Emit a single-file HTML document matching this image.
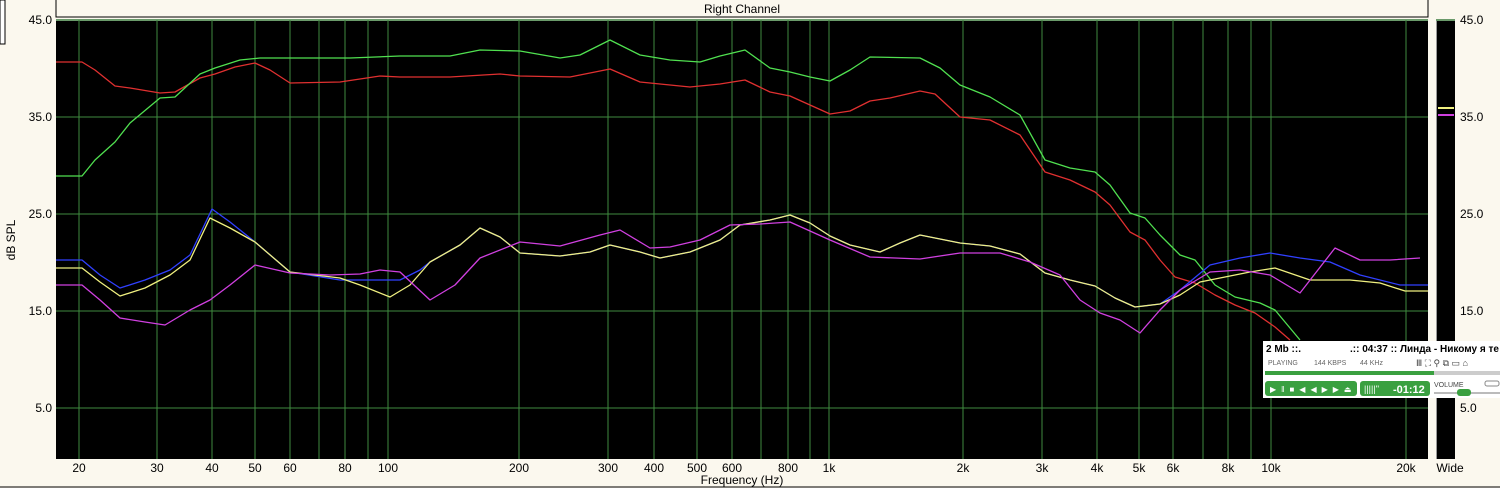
<!DOCTYPE html><html><head><style>
body{margin:0;width:1500px;height:488px;background:#fbf8ee;overflow:hidden;font-family:"Liberation Sans",sans-serif;position:relative}
</style></head><body>
<svg width="1500" height="488" style="position:absolute;left:0;top:0" font-family="Liberation Sans, sans-serif">
<rect x="0" y="0" width="5" height="44" fill="#fff" stroke="#000" stroke-width="1"/>
<rect x="56" y="-1" width="1372" height="18" fill="#fbf8ee" stroke="#000"/>
<text x="742" y="13" font-size="12" text-anchor="middle">Right Channel</text>
<rect x="56" y="19" width="1372" height="440" fill="#000"/>
<line x1="56" y1="20" x2="1428" y2="20" stroke="#6a9a6a" stroke-width="2"/>
<g stroke="#3f8a3f" stroke-width="1">
<line x1="56" y1="117" x2="1428" y2="117"/><line x1="56" y1="214" x2="1428" y2="214"/><line x1="56" y1="311" x2="1428" y2="311"/><line x1="56" y1="408" x2="1428" y2="408"/>
<line x1="79" y1="20" x2="79" y2="459"/><line x1="157" y1="20" x2="157" y2="459"/><line x1="212" y1="20" x2="212" y2="459"/><line x1="255" y1="20" x2="255" y2="459"/><line x1="290" y1="20" x2="290" y2="459"/><line x1="319" y1="20" x2="319" y2="459"/><line x1="345" y1="20" x2="345" y2="459"/><line x1="368" y1="20" x2="368" y2="459"/><line x1="388" y1="20" x2="388" y2="459"/>
<line x1="519" y1="20" x2="519" y2="459"/><line x1="608" y1="20" x2="608" y2="459"/><line x1="654" y1="20" x2="654" y2="459"/><line x1="697" y1="20" x2="697" y2="459"/><line x1="732" y1="20" x2="732" y2="459"/><line x1="761" y1="20" x2="761" y2="459"/><line x1="788" y1="20" x2="788" y2="459"/><line x1="810" y1="20" x2="810" y2="459"/><line x1="829" y1="20" x2="829" y2="459"/>
<line x1="963" y1="20" x2="963" y2="459"/><line x1="1042" y1="20" x2="1042" y2="459"/><line x1="1097" y1="20" x2="1097" y2="459"/><line x1="1139" y1="20" x2="1139" y2="459"/><line x1="1173" y1="20" x2="1173" y2="459"/><line x1="1203" y1="20" x2="1203" y2="459"/><line x1="1228" y1="20" x2="1228" y2="459"/><line x1="1251" y1="20" x2="1251" y2="459"/><line x1="1271" y1="20" x2="1271" y2="459"/><line x1="1406" y1="20" x2="1406" y2="459"/>
</g>
<g fill="none" stroke-width="1.3" stroke-linejoin="round">
<polyline stroke="#e03030" points="56,62 82,62 95,70 115,86 130,88 160,93 175,92 200,78 215,74 235,67 255,63 270,70 290,83 340,82 380,76 400,77 450,77 500,74 520,76 570,77 610,69 640,82 690,87 720,84 745,80 770,92 790,96 810,105 830,114 850,111 870,101 890,98 920,91 935,94 960,117 990,120 1020,135 1045,172 1070,180 1095,192 1110,205 1130,232 1145,240 1160,260 1175,277 1195,283 1215,295 1235,305 1255,313 1275,327 1290,340"/>
<polyline stroke="#50e050" points="56,176 82,176 95,160 115,142 130,123 160,98 175,97 200,74 215,68 240,60 260,58 290,58 350,58 400,56 450,56 480,50 520,51 560,58 580,55 610,40 640,55 670,60 700,62 720,56 745,50 770,68 790,72 810,77 830,81 850,70 870,57 920,58 940,68 960,85 990,97 1020,115 1045,160 1070,168 1095,172 1110,185 1130,213 1145,218 1160,235 1180,255 1195,260 1215,285 1235,297 1260,303 1275,310 1300,340"/>
<polyline stroke="#3040ff" points="56,260 82,260 100,275 120,288 145,280 170,270 190,255 212,209 230,222 255,242 290,272 340,280 400,280 420,270 430,262 460,245 480,228 500,237 520,253 560,256 590,252 610,245 640,252 660,258 690,252 720,240 740,225 770,220 790,215 810,223 830,236 850,245 880,252 900,243 920,235 960,243 990,246 1020,254 1045,273 1070,280 1095,286 1115,298 1135,307 1160,304 1180,290 1210,265 1240,258 1270,253 1300,258 1330,262 1360,275 1400,285 1428,285"/>
<polyline stroke="#f0f080" points="56,268 82,268 100,282 120,296 145,288 170,275 190,260 210,218 230,228 255,242 290,272 340,278 360,285 390,297 410,285 430,262 460,245 480,228 500,237 520,253 560,256 590,252 610,245 640,252 660,258 690,252 720,240 740,225 770,220 790,215 810,223 830,236 850,245 880,252 900,243 920,235 960,243 990,246 1020,254 1045,273 1070,280 1095,286 1115,298 1135,307 1160,304 1180,295 1200,282 1230,276 1250,272 1275,268 1310,280 1350,280 1380,283 1405,291 1428,291"/>
<polyline stroke="#d040e0" points="56,285 82,285 100,300 120,318 145,322 165,325 190,310 210,300 230,285 255,265 290,273 330,275 360,274 380,270 400,272 430,300 455,285 480,258 520,242 560,246 600,235 620,230 650,248 670,247 700,240 730,225 760,224 790,222 830,240 870,257 920,259 960,253 1000,253 1030,262 1060,275 1080,300 1100,313 1120,320 1140,333 1160,310 1180,290 1210,272 1240,270 1270,275 1300,293 1335,248 1360,260 1390,260 1420,258"/>
</g>
<rect x="1436" y="19" width="19" height="440" fill="#000"/>
<line x1="1436.5" y1="19" x2="1436.5" y2="459" stroke="#999"/>
<line x1="1436" y1="20" x2="1455" y2="20" stroke="#6a9a6a" stroke-width="2"/>
<line x1="1438" y1="108" x2="1454" y2="108" stroke="#f0f080" stroke-width="2"/>
<line x1="1438" y1="115" x2="1454" y2="115" stroke="#d040e0" stroke-width="2"/>
<g font-size="12" fill="#000">
<text x="52" y="24" text-anchor="end">45.0</text><text x="52" y="121" text-anchor="end">35.0</text><text x="52" y="218" text-anchor="end">25.0</text><text x="52" y="315" text-anchor="end">15.0</text><text x="52" y="412" text-anchor="end">5.0</text>
<text x="1460" y="24">45.0</text><text x="1460" y="121">35.0</text><text x="1460" y="218">25.0</text><text x="1460" y="315">15.0</text><text x="1460" y="412">5.0</text>
<text x="15" y="240" transform="rotate(-90 15 240)" text-anchor="middle">dB SPL</text>
<g text-anchor="middle">
<text x="79" y="472">20</text><text x="157" y="472">30</text><text x="212" y="472">40</text><text x="255" y="472">50</text><text x="290" y="472">60</text><text x="345" y="472">80</text><text x="388" y="472">100</text><text x="519" y="472">200</text><text x="608" y="472">300</text><text x="654" y="472">400</text><text x="697" y="472">500</text><text x="732" y="472">600</text><text x="788" y="472">800</text><text x="829" y="472">1k</text><text x="963" y="472">2k</text><text x="1042" y="472">3k</text><text x="1097" y="472">4k</text><text x="1139" y="472">5k</text><text x="1173" y="472">6k</text><text x="1228" y="472">8k</text><text x="1271" y="472">10k</text><text x="1406" y="472">20k</text><text x="1450" y="472">Wide</text>
<text x="742" y="484">Frequency (Hz)</text>
</g></g>
<line x1="0" y1="487" x2="1500" y2="487" stroke="#000"/>
<rect x="1263" y="341" width="237" height="57" fill="#fff"/>
<text x="1266" y="352" font-size="10" font-weight="bold">2 Mb ::.</text>
<text x="1350" y="352" font-size="10" font-weight="bold">.:: 04:37 :: Линда - Никому я те</text>
<text x="1268" y="365" font-size="7" fill="#666">PLAYING</text><text x="1314" y="365" font-size="7" fill="#666">144 KBPS</text><text x="1360" y="365" font-size="7" fill="#666">44 KHz</text>
<text x="1416" y="366" font-size="9" fill="#444">Ⅲ ⛶ ⚲ ⧉ ▭ ⌂</text>
<rect x="1265" y="371" width="169" height="4" fill="#3aa040"/><rect x="1434" y="371" width="66" height="4" fill="#ccc"/>
<rect x="1265" y="381" width="92" height="15" rx="3" fill="#3aa040"/>
<text x="1270" y="392" font-size="8" fill="#fff" letter-spacing="5">▶‖■◀◀▶▶⏏</text>
<rect x="1360" y="381" width="70" height="15" rx="3" fill="#3aa040"/>
<text x="1393" y="393" font-size="11" font-weight="bold" fill="#fff">-01:12</text>
<text x="1364" y="392" font-size="9" fill="#fff">|||||''</text>
<text x="1434" y="387" font-size="7" fill="#444">VOLUME</text>
<rect x="1434" y="392" width="66" height="2" fill="#bbb"/><rect x="1457" y="389" width="14" height="7" rx="3" fill="#3aa040"/>
<rect x="1485" y="381" width="14" height="5" rx="2" fill="#fff" stroke="#888"/>
</svg>
</body></html>
